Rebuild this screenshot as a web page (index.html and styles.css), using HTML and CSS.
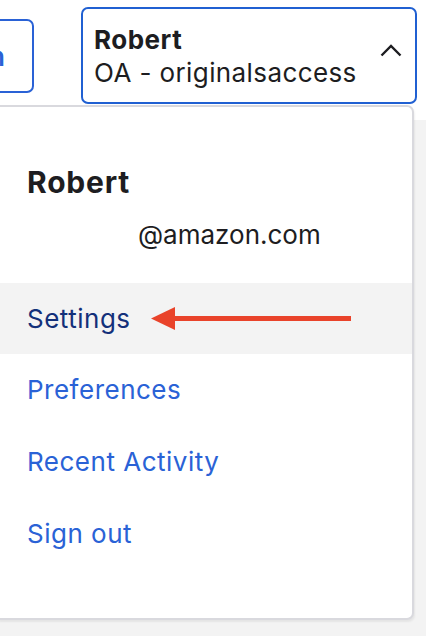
FILE: index.html
```html
<!DOCTYPE html>
<html>
<head>
<meta charset="utf-8">
<link rel="stylesheet" href="styles.css">
</head>
<body>
<div class="page">
  <header class="topbar">
    <button class="ghost-btn">Sign in</button>
    <button class="account-btn">
      <span class="account-text">
        <span class="account-name">Robert</span>
        <span class="account-org">OA - originalsaccess</span>
      </span>
      <svg class="chevron" width="22" height="13" viewBox="0 0 22 13"><path d="M1.5 11.5 L11 2 L20.5 11.5" fill="none" stroke="#1d1d21" stroke-width="2.4"/></svg>
    </button>
  </header>
  <div class="content"></div>
  <div class="menu">
    <div class="menu-head">
      <div class="menu-name">Robert</div>
      <div class="menu-email">@amazon.com</div>
    </div>
    <ul class="menu-list">
      <li class="menu-item active">
        <a class="menu-link">Settings</a>
        <svg class="arrow" width="202" height="26" viewBox="0 0 202 26"><polygon points="0,12.5 24,1 24,24" fill="#e9432a"/><rect x="22" y="10" width="178" height="5" fill="#e9432a"/></svg>
      </li>
      <li class="menu-item"><a class="menu-link">Preferences</a></li>
      <li class="menu-item"><a class="menu-link">Recent Activity</a></li>
      <li class="menu-item"><a class="menu-link">Sign out</a></li>
    </ul>
  </div>
</div>
</body>
</html>
```
FILE: styles.css
```css
* { box-sizing: border-box; }
html, body { margin: 0; padding: 0; }
body {
  width: 426px;
  height: 636px;
  overflow: hidden;
  background: #f3f3f3;
  font-family: Inter, "Noto Sans", sans-serif;
  color: #1d1d21;
}
.page { position: relative; width: 426px; height: 636px; }
.topbar {
  height: 120px;
  background: #ffffff;
  display: flex;
  align-items: flex-start;
  padding-top: 7px;
}
.ghost-btn {
  margin-top: 12px;
  margin-left: -90px;
  width: 124px;
  height: 74px;
  border: 2px solid #2a62d6;
  border-radius: 7px;
  background: #fff;
  color: #2a62d6;
  font-family: inherit;
  font-size: 26px;
  font-weight: 600;
  text-align: right;
  padding: 0 27px 0 0;
  white-space: nowrap;
}
.account-btn {
  margin-left: 47px;
  width: 336px;
  height: 97px;
  border: 2.5px solid #2060d2;
  border-radius: 7px;
  background: #fff;
  display: flex;
  align-items: center;
  justify-content: space-between;
  padding: 0 13px 0 11px;
  font-family: inherit;
  color: #1d1d21;
  text-align: left;
}
.account-text { display: flex; flex-direction: column; }
.account-name { font-size: 26px; font-weight: 700; line-height: 33px; letter-spacing: 0.5px; }
.account-org { font-size: 26px; font-weight: 400; line-height: 33px; letter-spacing: 0.4px; }
.chevron { margin-top: -10px; }
.menu {
  position: absolute;
  top: 105px;
  left: -2px;
  width: 416px;
  height: 515px;
  background: #fff;
  border: 2px solid #d9d9de;
  border-radius: 0 7px 7px 0;
  box-shadow: 1px 2px 2px rgba(0,0,0,0.06);
}
.menu-head { padding: 57px 0 0 27px; height: 176px; }
.menu-name { font-size: 30px; font-weight: 700; line-height: 36px; letter-spacing: 0.8px; color: #1d1d21; }
.menu-email { font-size: 26px; line-height: 32px; padding-left: 111px; margin-top: 19px; color: #1d1d21; }
.menu-list { list-style: none; margin: 0; padding: 0; }
.menu-item {
  height: 72px;
  display: flex;
  align-items: center;
  padding-left: 27px;
}
.menu-item.active { height: 71px; background: #f3f3f3; }
.menu-link {
  font-size: 26px;
  line-height: 30px;
  letter-spacing: 0.5px;
  color: #2a62d6;
  text-decoration: none;
}
.active .menu-link { color: #13307a; }
.arrow { margin-left: 20px; }
```
